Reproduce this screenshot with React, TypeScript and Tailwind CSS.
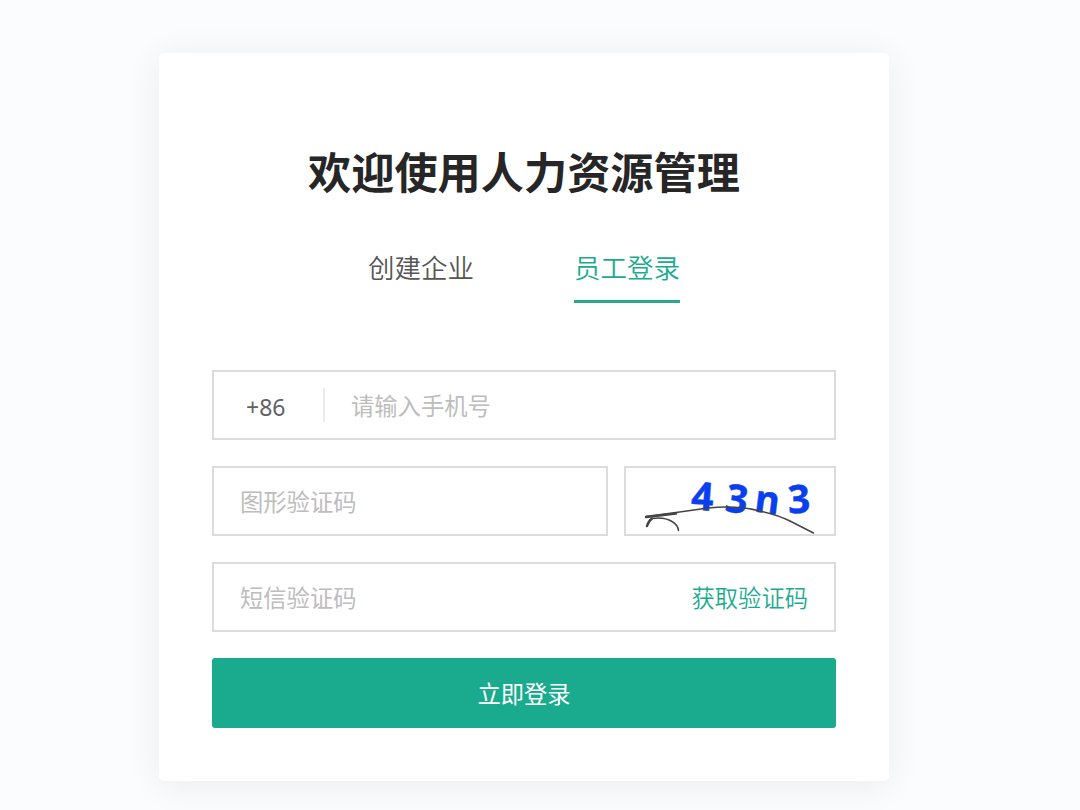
/** Login card: phone number, image captcha and SMS code. */
import { useState } from 'react';

const TABS = [
  { id: 'create', label: '创建企业' },
  { id: 'login', label: '员工登录' },
];

const TAB_CLASS =
  "h-[58px] border-b-[3px] pb-[11px] font-['Noto_Sans_CJK_SC',sans-serif] text-[26.5px] font-[350] leading-[44px]";
const FIELD_CLASS = 'flex h-[70px] items-center border-2 border-[#dcdcdc] bg-white';
const INPUT_CLASS =
  'h-full min-w-0 flex-1 bg-transparent pt-px text-[23.3px] text-[#606266] outline-none placeholder:text-[#bdbdbd]';

function Captcha() {
  return (
    <svg width="208" height="66" viewBox="626 468 208 66" role="img" aria-label="图形验证码">
      <g
        fill="#0a3ff0"
        stroke="#0a3ff0"
        strokeWidth="0.5"
        fontFamily="'Open Sans', sans-serif"
        fontWeight="700"
        fontSize="39"
      >
        <text transform="translate(690.5 509.5) rotate(4)">4</text>
        <text transform="translate(724 511) rotate(8)">3</text>
        <text transform="translate(753.5 511.5) rotate(7)" fontSize="38">n</text>
        <text transform="translate(788.5 513.500) rotate(-3)">3</text>
      </g>
      <g fill="none" stroke="#444" strokeLinecap="round" strokeLinejoin="round">
        <path d="M646 516.500 L676 512.500 L708 508 Q737 505 760 511 Q778 515 790 521 L813.500 533" strokeWidth="1.500" />
        <path d="M646 517 L676 513.500" strokeWidth="2.500" />
        <path d="M647 526 Q648.500 521 652 518.500" strokeWidth="2.500" />
        <path d="M652 518.500 Q664 516.500 672 521.500 Q678 525 678.500 530.500" strokeWidth="1.500" />
      </g>
    </svg>
  );
}

export default function App() {
  const [tab, setTab] = useState('login');

  return (
    <div className="h-[810px] overflow-hidden bg-[#fafcfe] pl-[159px] pt-[53px] font-['Noto_Sans','Noto_Sans_CJK_SC',sans-serif]">
      <div className="h-[728px] w-[730px] rounded-[5px] bg-white px-[53px] pt-[87px] shadow-[0_4px_36px_rgba(0,0,0,0.07)]">
        <h1 className="text-center font-['Noto_Sans_CJK_SC',sans-serif] text-[43.2px] font-bold leading-[60px] text-[#262626]">
          欢迎使用人力资源管理
        </h1>

        <div className="mt-[45px] flex justify-center gap-[100px]">
          {TABS.map(({ id, label }) => (
            <button
              key={id}
              type="button"
              onClick={() => setTab(id)}
              className={`${TAB_CLASS} ${tab === id ? 'border-[#2aa88c] text-[#1aab8e]' : 'border-transparent text-[#555]'}`}
            >
              {label}
            </button>
          ))}
        </div>

        <form className="mt-[67px] flex flex-col gap-[26px]" onSubmit={(e) => e.preventDefault()}>
          <div className={FIELD_CLASS}>
            <span className="w-[109px] pl-8 pt-[5px] text-[23px] text-[#606266]">+86</span>
            <span className="h-[34px] w-[2px] bg-[#ebebeb]" />
            <input type="tel" placeholder="请输入手机号" className={`${INPUT_CLASS} pl-[26px]`} />
          </div>

          <div className="flex gap-4">
            <div className={`${FIELD_CLASS} w-[396px]`}>
              <input type="text" placeholder="图形验证码" className={`${INPUT_CLASS} pl-[26px]`} />
            </div>
            <div className={`${FIELD_CLASS} w-[212px]`}>
              <Captcha />
            </div>
          </div>

          <div className={FIELD_CLASS}>
            <input type="text" placeholder="短信验证码" className={`${INPUT_CLASS} pl-[26px]`} />
            <button type="button" className="pr-[26px] pt-[2px] text-[23.3px] font-[350] text-[#1aab8e]">
              获取验证码
            </button>
          </div>

          <button type="submit" className="h-[70px] rounded-[3px] bg-[#1aab8e] pt-[3px] text-[23.3px] text-white">
            立即登录
          </button>
        </form>
      </div>
    </div>
  );
}
